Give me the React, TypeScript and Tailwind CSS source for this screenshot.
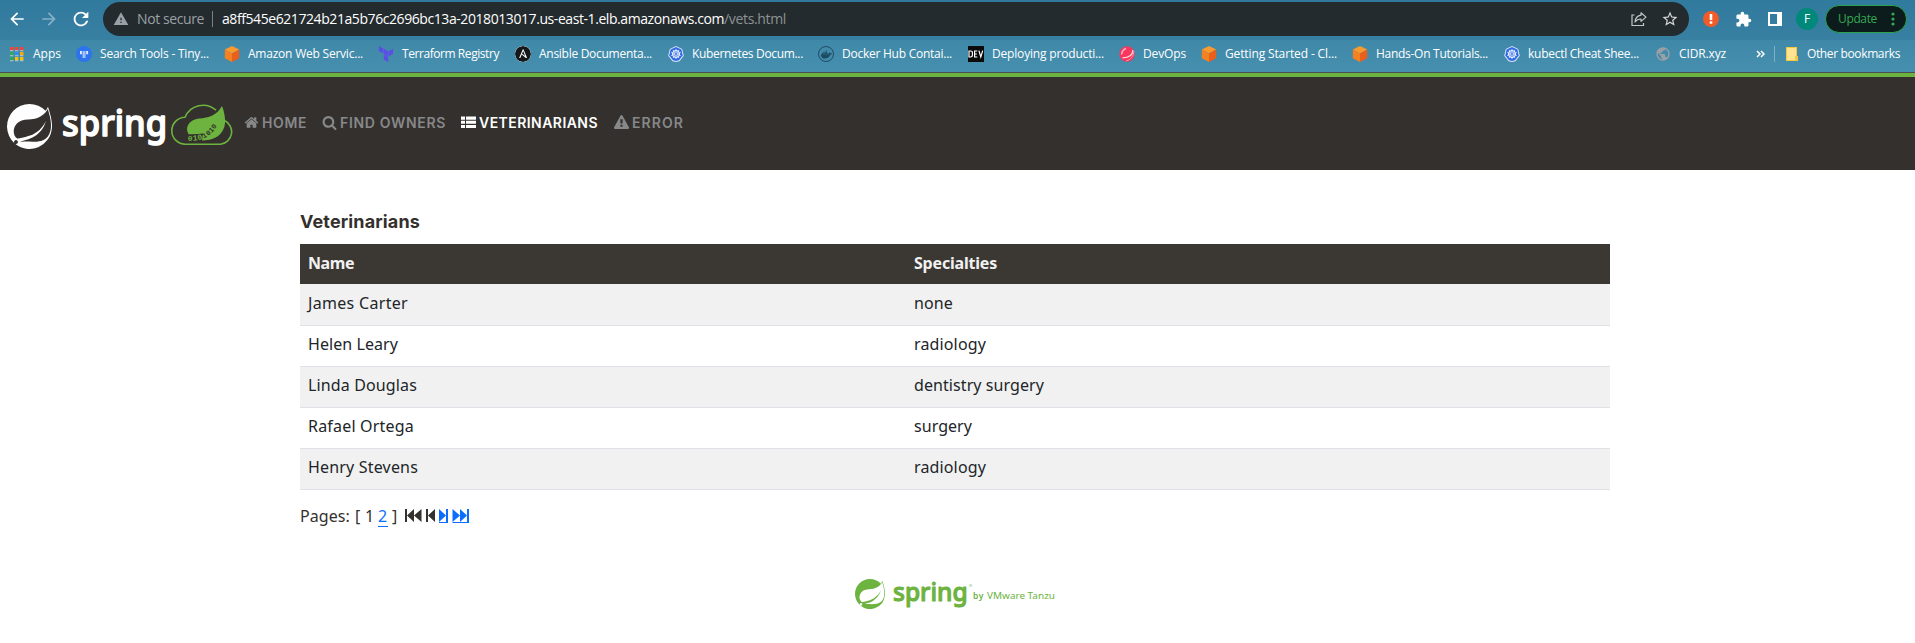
import { useLayoutEffect, useRef, type ReactNode } from "react";
import { SiAnsible, SiDocker, SiKubernetes, SiSpring, SiTerraform } from "react-icons/si";
import { MdArrowBack, MdArrowForward, MdExtension, MdPublic, MdRefresh, MdStarBorder, MdWarning } from "react-icons/md";

/** Text whose tracking is adjusted so that it fills the given width. */
function Fit({ w, className = "", children }: { w: number; className?: string; children: string }) {
  const ref = useRef<HTMLSpanElement>(null);
  useLayoutEffect(() => {
    const el = ref.current;
    if (!el) return;
    el.style.letterSpacing = "0px";
    const natural = el.getBoundingClientRect().width;
    el.style.letterSpacing = `${(w - natural) / children.length}px`;
  }, [w, children]);
  return (
    <span ref={ref} className={`inline-block shrink-0 whitespace-pre ${className}`}>
      {children}
    </span>
  );
}

const AppsIcon = () => (
  <svg viewBox="0 0 16 16" className="size-4">
    {[
      ["#f44336", "#f44336", "#f44336"],
      ["#34a853", "#2f8df5", "#f9ab00"],
      ["#34a853", "#fbbc04", "#fbbc04"],
    ].map((row, r) =>
      row.map((c, i) => (
        <g key={`${r}${i}`}>
          <rect x={1 + i * 5} y={1 + r * 5} width="3.4" height="3.4" fill={c} />
          <rect x={1 + i * 5} y={4.4 + r * 5} width="3.4" height="0.8" fill="#c9dbe4" />
        </g>
      )),
    )}
  </svg>
);

const TinyIcon = () => (
  <svg viewBox="0 0 16 16" className="size-4">
    <circle cx="8" cy="8" r="8" fill="#2e73ee" />
    <path d="M4 5h1.900v3.200H4zM6.700 5h1v7h-1zM8.400 5h1v7h-1zM10.200 5h1.900v3.200h-1.900z" fill="#dfeaff" />
  </svg>
);

const CubeIcon = () => (
  <svg viewBox="0 0 16 16" className="size-4">
    <path d="M8 0l7.200 3.600L8 7.400.8 3.600z" fill="#fb9a2c" />
    <path d="M.8 3.600L8 7.400V16L.8 12.200z" fill="#f58220" />
    <path d="M15.200 3.600L8 7.400V16l7.200-3.800z" fill="#ea5f1c" />
  </svg>
);

const KubeIcon = () => (
  <span className="flex size-4 items-center justify-center">
    <svg viewBox="0 0 16 16" className="size-4">
      <path d="M8 0l6.200 2.900L15.800 9.700 11.500 15.300 8 16 4.500 15.300.2 9.700 1.800 2.900z" fill="#dce6fb" />
      <path d="M8 1l5.400 2.600 1.300 5.900-3.700 4.800L8 15l-3-.7-3.700-4.800 1.300-5.900z" fill="#326ce5" />
      <circle cx="8" cy="8" r="3.500" fill="none" stroke="#fff" strokeWidth="1" />
      <path d="M8 3v10M3.200 6.500l9.600 3M12.800 6.500l-9.600 3M5 12l6-8M11 12L5 4" stroke="#fff" strokeWidth=".7" />
      <circle cx="8" cy="8" r="1" fill="#326ce5" />
    </svg>
  </span>
);

const DockerIcon = () => (
  <span className="flex size-4 items-center justify-center rounded-full border border-[#204c63] text-[#1b4a61]">
    <SiDocker className="size-[11px]" />
  </span>
);

const DevIcon = () => (
  <svg viewBox="0 0 16 16" className="size-4">
    <rect width="16" height="16" fill="#0a0a0a" />
    <path
      d="M1 5v6h1.600q1.800 0 1.800-1.700V6.700Q4.400 5 2.600 5zM9.300 5H6.600v6h2.700M6.600 8h2.300M10.900 4.600l1.900 6.400 1.900-6.400"
      fill="none"
      stroke="#fff"
      strokeWidth="1.200"
    />
  </svg>
);

const BallIcon = () => (
  <svg viewBox="0 0 16 16" className="size-4">
    <circle cx="8" cy="8" r="7.700" fill="#f8375f" />
    <path d="M13.800 4Q14 11.500 3.500 11.800" fill="none" stroke="#ffd9e0" strokeWidth="1.200" />
    <path d="M2.600 8.500Q3 4 7 2.500" fill="none" stroke="#ffb3c1" strokeWidth="1.500" />
    <path d="M15 5Q14.500 13 7 15" fill="none" stroke="#fbb" strokeWidth=".7" />
  </svg>
);

const bookmarks: { label: string; w: number; cell: string; icon: ReactNode }[] = [
  { label: "Apps", w: 28, cell: "w-[67px]", icon: <AppsIcon /> },
  { label: "Search Tools - Tiny...", w: 109, cell: "w-[148px]", icon: <TinyIcon /> },
  { label: "Amazon Web Servic...", w: 115, cell: "w-[154px]", icon: <CubeIcon /> },
  { label: "Terraform Registry", w: 97, cell: "w-[137px]", icon: <SiTerraform className="size-4 text-[#5c4ee5]" /> },
  {
    label: "Ansible Documenta...",
    w: 113,
    cell: "w-[153px]",
    icon: <SiAnsible className="size-4 rounded-full bg-white text-[#14181b]" />,
  },
  { label: "Kubernetes Docum...", w: 111, cell: "w-[150px]", icon: <KubeIcon /> },
  { label: "Docker Hub Contai...", w: 110, cell: "w-[150px]", icon: <DockerIcon /> },
  { label: "Deploying producti...", w: 112, cell: "w-[151px]", icon: <DevIcon /> },
  { label: "DevOps", w: 43, cell: "w-[82px]", icon: <BallIcon /> },
  { label: "Getting Started - Cl...", w: 112, cell: "w-[151px]", icon: <CubeIcon /> },
  { label: "Hands-On Tutorials...", w: 112, cell: "w-[152px]", icon: <CubeIcon /> },
  { label: "kubectl Cheat Shee...", w: 111, cell: "w-[151px]", icon: <KubeIcon /> },
  { label: "CIDR.xyz", w: 47, cell: "w-[101px]", icon: <MdPublic className="size-4 text-[#9aa0a6]" /> },
];

function Toolbar() {
  return (
    <div className="flex h-10 bg-gradient-to-b from-[#307a9e] to-[#3880a2] text-white">
      <div className="flex h-[38px] w-[103px] shrink-0 items-center pl-[7px]">
        <MdArrowBack className="size-5" />
        <MdArrowForward className="ml-3 size-5 text-[#86b0c6]" />
        <MdRefresh className="ml-[11px] size-[22px]" />
      </div>
      <div className="mt-0.5 flex h-[34px] w-[1586px] shrink-0 items-center rounded-full bg-[#242b2e] font-['Open_Sans',sans-serif] text-sm">
        <MdWarning className="ml-2.5 size-4 text-[#9aa0a6]" />
        <Fit w={67} className="ml-[8px] text-[#9aa0a6]">Not secure</Fit>
        <span className="ml-[8px] h-4 w-px bg-[#7c8184]" />
        <Fit w={502} className="ml-[9px]">a8ff545e621724b21a5b76c2696bc13a-2018013017.us-east-1.elb.amazonaws.com</Fit>
        <Fit w={62} className="text-[#8d9294]">/vets.html</Fit>
        <svg viewBox="0 0 16 16" className="ml-auto size-4" fill="none" stroke="#c4c7c8" strokeWidth="1.200">
          <path d="M3.500 4H1v10.500h11.500V12" />
          <path d="M10 1.800l5 4.300-5 4.300V8Q6 8 4 11q.5-6 6-6.800z" strokeLinejoin="round" />
        </svg>
        <MdStarBorder className="mr-[10px] ml-[14px] size-[18px] text-[#d5d7d8]" />
      </div>
      <div className="flex h-[38px] items-center">
        <svg viewBox="0 0 16 16" className="ml-3.5 size-4">
          <circle cx="8" cy="8" r="8" fill="#f15a29" />
          <path d="M6.700 3h2.600v6H6.700zM6.700 10.300h2.600v2.400H6.700z" fill="#fff" />
        </svg>
        <MdExtension className="ml-[16px] size-[17px]" />
        <svg viewBox="0 0 14 14" className="ml-4 size-3.5">
          <path d="M0 0h14v14H0zM2 2v10h7V2z" fillRule="evenodd" fill="#fff" />
        </svg>
        <span className="ml-[14px] flex size-[22px] items-center justify-center rounded-full bg-[#00897b] font-['Open_Sans',sans-serif] text-xs">
          F
        </span>
        <div className="ml-[7px] flex h-7 w-[82px] items-center rounded-full border border-[#2ba24c] bg-[#0c1c1c] text-[#34a853]">
          <Fit w={39} className="ml-[12px] font-['Open_Sans',sans-serif] text-xs">Update</Fit>
          <svg viewBox="0 0 4 14" className="ml-[14px] h-3.5 w-1" fill="currentColor">
            <circle cx="2" cy="2" r="1.600" />
            <circle cx="2" cy="7" r="1.600" />
            <circle cx="2" cy="12" r="1.600" />
          </svg>
        </div>
      </div>
    </div>
  );
}

function BookmarksBar() {
  return (
    <div className="flex h-8 items-center bg-gradient-to-b from-[#3f88a8] to-[#468fae] pb-[4px] pl-[9px] font-['Open_Sans',sans-serif] text-xs text-white">
      {bookmarks.map((b) => (
        <div key={b.label} className={`flex shrink-0 items-center gap-2 ${b.cell}`}>
          {b.icon}
          <Fit w={b.w}>{b.label}</Fit>
        </div>
      ))}
      <svg viewBox="0 0 9 8" className="h-2 w-[9px]" fill="none" stroke="#fff" strokeWidth="1.500">
        <path d="M1 1l3 3-3 3M5 1l3 3-3 3" />
      </svg>
      <span className="ml-[9px] h-4 w-px bg-[#7fb0c6]" />
      <svg viewBox="0 0 12 14" className="ml-[11px] h-3.5 w-3">
        <path d="M0 0h11v9h1v5H0z" fill="#f5c93f" />
        <path d="M1 1h9v8H9v4H1z" fill="#ffe392" />
      </svg>
      <Fit w={93} className="ml-[9px]">Other bookmarks</Fit>
    </div>
  );
}

function Wordmark({ className, width }: { className: string; width: number }) {
  return (
    <svg viewBox="0 0 104 50" className={`overflow-visible ${className}`} width={width} fill="currentColor" stroke="currentColor">
      <text
        x="0"
        y="33"
        textLength="105"
        lengthAdjust="spacingAndGlyphs"
        strokeWidth="1.500"
        strokeLinejoin="round"
        className="font-['Noto_Sans',sans-serif] text-[36px] font-medium"
      >
        spring
      </text>
    </svg>
  );
}

const CloudLeaf = () => (
  <svg viewBox="0 0 63 44" className="mt-[3px] ml-[5px] h-11 w-[63px]">
    <path
      d="M14.500 41.200A13.300 13.300 0 0 1 14 14.300A19.500 19.500 0 0 1 45 7.200M53.500 17.500A12.500 12.500 0 0 1 49.500 41.200H14.500"
      fill="none"
      stroke="#6db33f"
      strokeWidth="1.600"
    />
    <path
      d="M51 3C54.500 12 55 21 52.500 26C49 33.500 42 37.500 31 37.500L32 30.500Q25 31.500 17.500 31.200C13.500 24 18 17 28 15.500C38 15 46 12 51 3Z"
      fill="#6db33f"
    />
    <g className="font-['Liberation_Mono',monospace] text-[8px] font-bold" fill="#6db33f">
      <text transform="translate(16.800 38.200)">0</text>
      <text transform="translate(22 37.800) rotate(-6)">1</text>
      <text transform="translate(27 37.200) rotate(-12)">0</text>
    </g>
    <g className="font-['Liberation_Mono',monospace] text-[7px] font-bold" fill="#34302d">
      <text transform="translate(32.500 35.500) rotate(-24)">1</text>
      <text transform="translate(37 33) rotate(-36)">0</text>
      <text transform="translate(40.500 30) rotate(-46)">1</text>
      <text transform="translate(43.500 26.500) rotate(-54)">0</text>
    </g>
  </svg>
);

const iconPaths = {
  home: "M1472 992v480q0 26-19 45t-45 19h-384v-384h-256v384h-384q-26 0-45-19t-19-45v-480q0-1 .5-3t.5-3l575-474 575 474q1 2 1 6zm223-69l-62 74q-8 9-21 11h-3q-13 0-21-7l-692-577-692 577q-12 8-24 7-13-2-21-11l-62-74q-8-10-7-23.5t11-21.5l719-599q32-26 76-26t76 26l244 204v-195q0-14 9-23t23-9h192q14 0 23 9t9 23v408l219 182q10 8 11 21.500t-7 23.500z",
  search:
    "M1216 832q0-185-131.5-316.5t-316.5-131.5-316.5 131.5-131.5 316.5 131.5 316.5 316.5 131.5 316.5-131.5 131.5-316.5zm512 832q0 52-38 90t-90 38q-54 0-90-38l-343-342q-179 124-399 124-143 0-273.5-55.5t-225-150-150-225-55.5-273.5 55.5-273.5 150-225 225-150 273.5-55.5 273.5 55.5 225 150 150 225 55.5 273.5q0 220-124 399l343 343q37 37 37 90z",
  list: "M0 190h480v370H0zM600 190h1192v370H600zM0 690h480v370H0zM600 690h1192v370H600zM0 1190h480v370H0zM600 1190h1192v370H600z",
  warning:
    "M1024 1375v-190q0-14-9.5-23.5t-22.5-9.5h-192q-13 0-22.5 9.5t-9.5 23.5v190q0 14 9.5 23.5t22.5 9.5h192q13 0 22.5-9.5t9.5-23.5zm-2-374l18-459q0-12-10-19-13-11-24-11h-220q-11 0-24 11-10 7-10 21l17 457q0 10 10 16.5t24 6.5h185q14 0 23.5-6.5t10.5-16.5zm-14-934l768 1408q35 63-2 126-17 29-46.5 46t-63.5 17h-1536q-34 0-63.5-17t-46.5-46q-37-63-2-126l768-1408q17-31 47-49t65-18 65 18 47 49z",
};

function NavItem({ icon, label, w, className }: { icon: keyof typeof iconPaths; label: string; w: number; className: string }) {
  return (
    <a className={`flex items-center pb-[2px] ${className}`}>
      <svg viewBox="0 0 1792 1792" className="h-[15px] w-[15px]" fill="currentColor">
        <path d={iconPaths[icon]} />
      </svg>
      <Fit w={w} className="ml-[3px]">{label}</Fit>
    </a>
  );
}

function Navbar() {
  return (
    <nav className="flex h-[97px] items-center border-t-4 border-[#6db33f] bg-[#34302d] font-['Inter',sans-serif] text-sm leading-5 font-semibold text-[#87888a]">
      <SiSpring className="mt-[6px] ml-[7px] size-[45px] shrink-0 text-[#fefefe]" />
      <Wordmark width={104} className="mt-[9px] ml-[10px] h-[50px] text-white" />
      <CloudLeaf />
      <NavItem icon="home" label="HOME" w={45} className="ml-[10px]" />
      <NavItem icon="search" label="FIND OWNERS" w={106} className="ml-[15px]" />
      <NavItem icon="list" label="VETERINARIANS" w={119} className="ml-[15px] text-white" />
      <NavItem icon="warning" label="ERROR" w={52} className="ml-[16px]" />
    </nav>
  );
}

const vets = [
  { name: "James Carter", nw: 100, spec: "none", sw: 39 },
  { name: "Helen Leary", nw: 90, spec: "radiology", sw: 72 },
  { name: "Linda Douglas", nw: 109, spec: "dentistry surgery", sw: 130 },
  { name: "Rafael Ortega", nw: 106, spec: "surgery", sw: 58 },
  { name: "Henry Stevens", nw: 110, spec: "radiology", sw: 72 },
];

function VetTable() {
  return (
    <table className="w-full table-fixed border-collapse text-left text-base leading-6 text-[#212529]">
      <colgroup>
        <col className="w-[606px]" />
        <col />
      </colgroup>
      <thead>
        <tr className="h-10 bg-[#3b3732] text-[#f1f1f1]">
          <th className="px-2 pb-[2px] align-middle leading-6 font-bold">
            <Fit w={46}>Name</Fit>
          </th>
          <th className="px-2 pb-[2px] align-middle leading-6 font-bold">
            <Fit w={83}>Specialties</Fit>
          </th>
        </tr>
      </thead>
      <tbody>
        {vets.map((v) => (
          <tr key={v.name} className="h-[41px] border-b border-[#dee2e6] odd:bg-[#f1f1f1]">
            <td className="px-2 pb-[3px] align-middle leading-6">
              <Fit w={v.nw}>{v.name}</Fit>
            </td>
            <td className="px-2 pb-[3px] align-middle leading-6">
              <Fit w={v.sw}>{v.spec}</Fit>
            </td>
          </tr>
        ))}
      </tbody>
    </table>
  );
}

function Pager() {
  return (
    <div className="mt-[14px] flex h-6 items-center pt-px text-base leading-6 text-[#34302d]">
      <Fit w={50}>Pages:</Fit>
      <span className="ml-[5px] w-[10px]">[</span>
      <span className="w-[13px]">1</span>
      <a className="h-[21px] w-[10px] border-b border-[#0d6efd] leading-[21px] text-[#0d6efd]">2</a>
      <span className="ml-[4px] w-[13px]">]</span>
      <svg viewBox="0 0 65 16" className="h-4 w-[65px]">
        <g fill="#34302d">
          <path d="M0 1h2v13H0zM2 7.500L9 1v13zM9 7.500L16.500 1v13z" />
          <path d="M21 1h2v13h-2zM23 7.500L30 1v13z" />
        </g>
        <g fill="#0d6efd">
          <path d="M41 1h2v13h-2zM41 7.500L34 1v13zM34 14h9v1h-9z" />
          <path d="M62 1h2v13h-2zM62 7.500L55 1v13zM55 7.500L47.500 1v13zM47.500 14H64v1H47.500z" />
        </g>
      </svg>
    </div>
  );
}

function Footer() {
  return (
    <footer className="mt-[48px] flex h-9 items-center pl-[555px] text-[#6db33f]">
      <SiSpring className="size-[30px]" />
      <Wordmark width={74} className="mt-[3px] ml-[8px] h-9" />
      <svg viewBox="0 0 90 20" className="mt-[4px] h-5 w-[90px] overflow-visible" fill="currentColor">
        <text x="2" y="1" className="text-[4px]">®</text>
        <text x="6" y="13" textLength="10.500" className="text-[8.500px] font-semibold">by</text>
        <text x="20" y="13" textLength="68" lengthAdjust="spacingAndGlyphs" className="text-[8.500px]">VMware Tanzu</text>
      </svg>
    </footer>
  );
}

export default function App() {
  return (
    <div className="h-[643px] w-[1915px] overflow-hidden bg-white font-['Noto_Sans',sans-serif]">
      <Toolbar />
      <BookmarksBar />
      <div className="h-px bg-[#4b4f52]" />
      <Navbar />
      <main className="ml-[300px] w-[1310px] pt-[41px]">
        <h2 className="h-[33px] font-['Inter',sans-serif] text-[18px] leading-[22px] font-bold text-[#34302d]">
          <Fit w={120}>Veterinarians</Fit>
        </h2>
        <VetTable />
        <Pager />
        <Footer />
      </main>
    </div>
  );
}
